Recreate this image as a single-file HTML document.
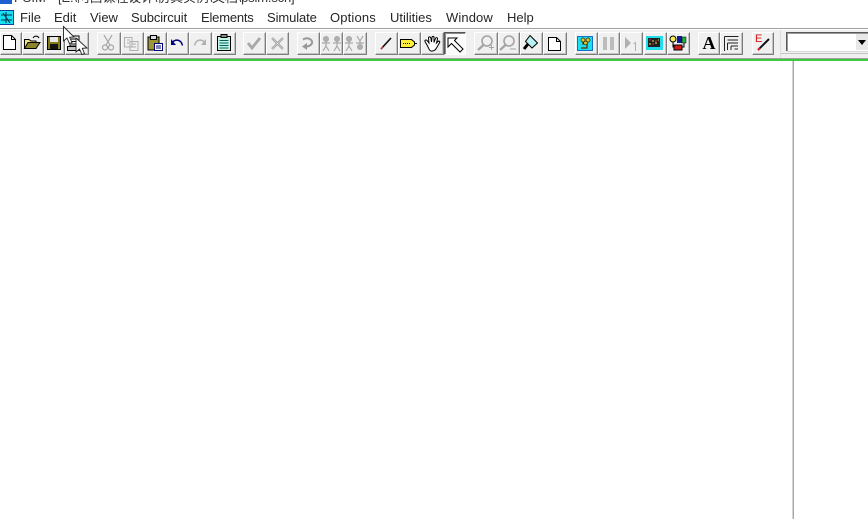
<!DOCTYPE html>
<html><head><meta charset="utf-8"><style>
html,body{margin:0;padding:0;background:#fff;width:868px;height:519px;overflow:hidden}
.m{position:absolute;top:10px;font:13px/15px "Liberation Sans","DejaVu Sans",sans-serif;color:#262626;white-space:nowrap}
.t{position:absolute;top:-9px;font:13px/14px "Liberation Sans","Noto Sans CJK SC",sans-serif;color:#333;white-space:nowrap}
svg{position:absolute;left:0;top:0}
.k{position:absolute;top:32px;height:23px;box-sizing:border-box;background:#f0f0f0;border:1px solid;border-color:#fff #7c7c7c #7c7c7c #fff;box-shadow:inset -1px -1px 0 #c4c4c4}
#bar{position:absolute;left:0;top:28px;width:868px;height:31px;box-sizing:border-box;background:#f0f0f0;border-top:1px solid #a0a0a0;border-bottom:1px solid #a0a0a0;box-shadow:inset 0 1px 0 #fff}
</style></head><body>
<div class="t" style="left:14px">PSIM -</div>
<div class="t" style="left:58px;letter-spacing:-.17px">[E:\阿西课程设计\仿真实例\文档\psim.sch]</div>
<div class="m" style="left:20px">File</div>
<div class="m" style="left:54px">Edit</div>
<div class="m" style="left:90px">View</div>
<div class="m" style="left:131px;letter-spacing:-.1px">Subcircuit</div>
<div class="m" style="left:201px;letter-spacing:-.2px">Elements</div>
<div class="m" style="left:267px;letter-spacing:-.1px">Simulate</div>
<div class="m" style="left:330px;letter-spacing:.15px">Options</div>
<div class="m" style="left:390px">Utilities</div>
<div class="m" style="left:446px;letter-spacing:.1px">Window</div>
<div class="m" style="left:507px">Help</div>
<div id="bar"></div>
<div class="k" style="left:0;width:22px"></div>
<div class="k" style="left:22px;width:22px"></div>
<div class="k" style="left:44px;width:21px"></div>
<div class="k" style="left:65px;width:24px"></div>
<div class="k" style="left:97px;width:24px"></div>
<div class="k" style="left:121px;width:23px"></div>
<div class="k" style="left:144px;width:23px"></div>
<div class="k" style="left:167px;width:22px"></div>
<div class="k" style="left:189px;width:23px"></div>
<div class="k" style="left:213px;width:23px"></div>
<div class="k" style="left:243px;width:23px"></div>
<div class="k" style="left:266px;width:23px"></div>
<div class="k" style="left:297px;width:23px"></div>
<div class="k" style="left:320px;width:23px"></div>
<div class="k" style="left:343px;width:24px"></div>
<div class="k" style="left:375px;width:23px"></div>
<div class="k" style="left:398px;width:23px"></div>
<div class="k" style="left:421px;width:23px"></div>
<div class="k" style="left:444px;width:22px;background:#fbfbfb;border-color:#555 #fff #fff #555;box-shadow:inset 1px 1px 0 #8a8a8a"></div>
<div class="k" style="left:474px;width:24px"></div>
<div class="k" style="left:498px;width:22px"></div>
<div class="k" style="left:520px;width:23px"></div>
<div class="k" style="left:543px;width:24px"></div>
<div class="k" style="left:575px;width:23px"></div>
<div class="k" style="left:598px;width:22px"></div>
<div class="k" style="left:620px;width:23px"></div>
<div class="k" style="left:644px;width:23px"></div>
<div class="k" style="left:667px;width:23px"></div>
<div class="k" style="left:698px;width:22px"></div>
<div class="k" style="left:720px;width:23px"></div>
<div class="k" style="left:752px;width:22px"></div>
<svg width="868" height="519" viewBox="0 0 868 519" fill="none" shape-rendering="crispEdges">
<rect x="0" y="59" width="868" height="2" fill="#3fc83f"/>
<rect x="792" y="61" width="1" height="458" fill="#d4d4d4"/>
<rect x="793" y="61" width="1" height="458" fill="#a8a8a8"/>
<!-- app icon -->
<rect x="0" y="0" width="12" height="4" fill="#1d5fd0"/>
<rect x="0" y="10" width="14" height="15" fill="#18e0f0"/>
<rect x="0" y="10" width="14" height="1" fill="#1040a0"/><rect x="13" y="10" width="1" height="15" fill="#1040a0"/><rect x="0" y="24" width="14" height="1" fill="#1040a0"/>
<path d="M1 15H12M1 20H12M6 12V23M3 13L10 23" stroke="#04304a"/>
<g shape-rendering="auto">
<!-- new -->
<path d="M3.500 35.500H11.500L15.500 39.500V49.500H3.500Z" fill="#fff" stroke="#000"/><path d="M11.500 35.500V39.500H15.500" stroke="#000"/>
<!-- open -->
<path d="M24.500 48.500V39.500H29L31 41H36V48.500Z" fill="#f4e58a" stroke="#000"/><path d="M24.500 48.500L28 42.500H40L36 48.500Z" fill="#8c8428" stroke="#000"/><path d="M33 38C35 35 38 36 39 38" stroke="#000"/>
<!-- save -->
<rect x="47.500" y="36.500" width="13" height="13" fill="#807a18" stroke="#000"/><rect x="50" y="37" width="8" height="5" fill="#e8e8e8"/><rect x="50" y="44" width="8" height="5" fill="#111"/>
<!-- print -->
<path d="M70 36H79V46H70Z" fill="#fff" stroke="#000"/><path d="M67.500 46.500H81V50.500H67.500Z" fill="#c8c8c8" stroke="#000"/><path d="M71 39H78M71 41.500H78M71 44H78" stroke="#000"/>
<path d="M76 38L76 52L79.500 49L82 54.500L84.500 53.500L82.300 48.300L87 48Z" fill="#fff" stroke="#222" stroke-width=".9"/>
<!-- cut -->
<path d="M104 35L110 45M112 35L106 45" stroke="#a4a4a4" stroke-width="1.200"/><circle cx="105" cy="47.500" r="2.500" stroke="#a4a4a4" stroke-width="1.200"/><circle cx="111" cy="47.500" r="2.500" stroke="#a4a4a4" stroke-width="1.200"/>
<!-- copy -->
<path d="M124.500 37.500H132V47H124.500Z M130 41.500H138V50.500H130Z" fill="#f0f0f0" stroke="#b0b0b0"/><path d="M127 40H130M127 43H129M132 44H136M132 47H136" stroke="#b0b0b0"/>
<!-- paste -->
<path d="M148 37H159V50H148Z" fill="#9d9636" stroke="#000"/><rect x="150.500" y="35.500" width="6" height="4" fill="#ddd" stroke="#000"/><rect x="154.500" y="43.500" width="8" height="7" fill="#fff" stroke="#00007a"/><path d="M156 46H161M156 48H161" stroke="#00007a"/>
<!-- undo -->
<path d="M172 42.500C176 38.500 181 39.500 182.500 45.500" stroke="#00007a" stroke-width="1.500"/><path d="M171 39V45H176Z" fill="#00007a"/>
<!-- redo -->
<path d="M205 42.500C201 38.500 196 39.500 194.500 45.500" stroke="#b0b0b0" stroke-width="1.500"/><path d="M206 39V45H201Z" fill="#b0b0b0"/>
<!-- paste2 -->
<rect x="217.500" y="36.500" width="13" height="14" fill="#c4f4e4" stroke="#000"/><rect x="221" y="34.500" width="6" height="3" fill="#888" stroke="#000"/><path d="M219.500 40.500H228.500M219.500 43H228.500M219.500 45.500H228.500M219.500 48H228.500" stroke="#006060"/>
<!-- check -->
<path d="M248 43L252 48L260 38" stroke="#a8a8a8" stroke-width="2.800"/>
<!-- X -->
<path d="M272 38L283 49M283 38L272 49" stroke="#a8a8a8" stroke-width="2.400"/><path d="M272 38L283 49M283 38L272 49" stroke="#e8e8e8" stroke-width=".5"/>
<!-- rotate -->
<path d="M303 39.500C308 36.500 313 40 312 43C311 46 307 47 304 46" stroke="#989898" stroke-width="2"/><path d="M307 43V50L302 46.500Z" fill="#989898"/>
<!-- flips -->
<g stroke="#a8a8a8" fill="#b0b0b0">
<circle cx="326" cy="39" r="2.500"/><circle cx="337" cy="39" r="2.500"/><path d="M326 41V46L323 51M326 46L329 51M322 43H330M337 41V46L334 51M337 46L340 51M333 43H341" fill="none" stroke-width="1.200"/>
<circle cx="349" cy="39" r="2.500"/><circle cx="360" cy="47" r="2.500"/><path d="M349 41V46L346 51M349 46L352 51M345 43H353M357 36L360 41L363 36M360 41V45M356 43H364" fill="none" stroke-width="1.200"/>
</g>
<!-- pencil -->
<path d="M381 49L391 38" stroke="#111" stroke-width="1.600"/><path d="M381 49L383 47" stroke="#b44" stroke-width="1.600"/>
<!-- tag -->
<path d="M400.500 39.500H411.500L414.500 42V45L411.500 47.500H400.500Z" fill="#ffef3a" stroke="#000"/><path d="M403 43.500H411" stroke="#000" stroke-dasharray="1 1"/><path d="M414.500 43.500H417" stroke="#000"/>
<!-- hand -->
<g transform="translate(0,2)"><path d="M427 43L425 39.500C424.500 38 426 37.500 427 38.500L429 41L428.500 36C428.500 34.500 430.500 34.500 430.800 36L431.500 40L432 35.500C432.300 34 434 34 434 35.500V40.500L435.500 36.500C436 35.200 437.800 35.500 437.500 37L436.500 41L438 39.500C439 38.500 440.300 39.500 439.500 40.700L436.500 46C435 49 431 50 429.500 48Z" fill="#fff" stroke="#000"/></g>
<!-- arrow -->
<path d="M448 38H457L454.500 40.500L463 49L460 52L451.500 43.500L448 47Z" fill="#fff" stroke="#000"/>
<!-- zoom + -->
<circle cx="487" cy="41" r="5" fill="#f0f0f0" stroke="#a4a4a4" stroke-width="1.600"/><path d="M483.500 45L478 50" stroke="#a4a4a4" stroke-width="2.200"/><path d="M489 47.500H494M491.500 45V50" stroke="#a4a4a4"/>
<!-- zoom - -->
<circle cx="509" cy="41" r="5" fill="#f0f0f0" stroke="#a4a4a4" stroke-width="1.600"/><path d="M505.500 45L500 50" stroke="#a4a4a4" stroke-width="2.200"/><path d="M510 49H516" stroke="#a4a4a4"/>
<!-- pin/brush -->
<path d="M530 35.500L537.500 43L532 48L525.500 41.500Z" fill="#b8f0f4" stroke="#000"/><path d="M528 44L524 49" stroke="#000" stroke-width="3"/>
<!-- doc -->
<path d="M548.500 37.500H556.500L560.500 41.500V50.500H548.500Z" fill="#fff" stroke="#000"/><path d="M556.500 37.500V41.500H560.500" stroke="#000"/>
<!-- psim run -->
<rect x="577.500" y="36.500" width="15" height="14" fill="#18e0f0" stroke="#1a70c0"/><path d="M581 48H587V44H583V41" stroke="#603000" stroke-width="1.300"/><circle cx="583" cy="40" r="2" fill="#e8c820" stroke="#222" stroke-width=".7"/><circle cx="588" cy="40" r="2" fill="#e8c820" stroke="#222" stroke-width=".7"/><circle cx="585.500" cy="43" r="1.800" fill="#e8c820" stroke="#222" stroke-width=".7"/>
<!-- pause -->
<rect x="603" y="37" width="4" height="13" fill="#bcbcbc"/><rect x="610" y="37" width="4" height="13" fill="#bcbcbc"/>
<!-- step -->
<path d="M625 37L631 43L625 49Z" fill="#b0b0b0"/><path d="M633.500 44L635.500 42.500V51" stroke="#b0b0b0"/>
<!-- scope -->
<rect x="646" y="36" width="17" height="14" fill="#22dcec"/><rect x="648" y="38" width="12" height="9" fill="#202020"/><path d="M649 44H651M652 41H654M655 43H657M658 40H659" stroke="#e8e840"/><path d="M649 40H651M652 44H654M655 41H657" stroke="#d03030"/>
<!-- blocks -->
<circle cx="673" cy="39" r="3" fill="#f8f050" stroke="#000"/><rect x="677" y="36" width="5" height="7" fill="#101890"/><rect x="682" y="37" width="4" height="6" fill="#20b040" stroke="#000" stroke-width=".5"/><rect x="674" y="45" width="8" height="5" fill="#d01818" stroke="#000"/><path d="M673 42V47H674M684 43V47H682" stroke="#000"/>
<!-- lines -->
<path d="M724.500 36.500H738.500M724.500 36.500V51M727.500 40H738M727.500 43H738M727.500 43V50M731 46H738M731 46V50M734.500 49H738" stroke="#222"/>
<!-- E pencil -->
<path d="M758 50L769 39" stroke="#111" stroke-width="2"/><path d="M758 50L760 48" stroke="#d02020" stroke-width="2"/>
<!-- cursor -->
<path d="M63.500 26.500V41L67 38L69.500 43.500L72 42.500L69.700 37.300L74 37Z" fill="#fff" stroke="#222" stroke-width=".9"/>
</g>
<!-- combobox -->
<rect x="786" y="32" width="82" height="19" fill="#fff"/>
<path d="M786.500 51V32.500H868" stroke="#5a5a5a"/><path d="M787.500 51V33.500H868" stroke="#9a9a9a"/><path d="M787 51.500H868" stroke="#d8d8d8"/>
<rect x="856" y="34" width="12" height="16" fill="#e8e8e8"/>
<path d="M858 40H866L862 45Z" fill="#000" shape-rendering="auto"/>
<path d="M781 53.500H868" stroke="#c4c4c4"/><path d="M780.500 30V58" stroke="#dcdcdc"/>
</svg>
<div style="position:absolute;left:698px;top:33px;width:22px;text-align:center;font:bold 18px/20px 'Liberation Serif',serif;color:#000">A</div>
<div style="position:absolute;left:755px;top:33px;font:11px/13px 'Liberation Sans',sans-serif;color:#d01818">E</div>
</body></html>
